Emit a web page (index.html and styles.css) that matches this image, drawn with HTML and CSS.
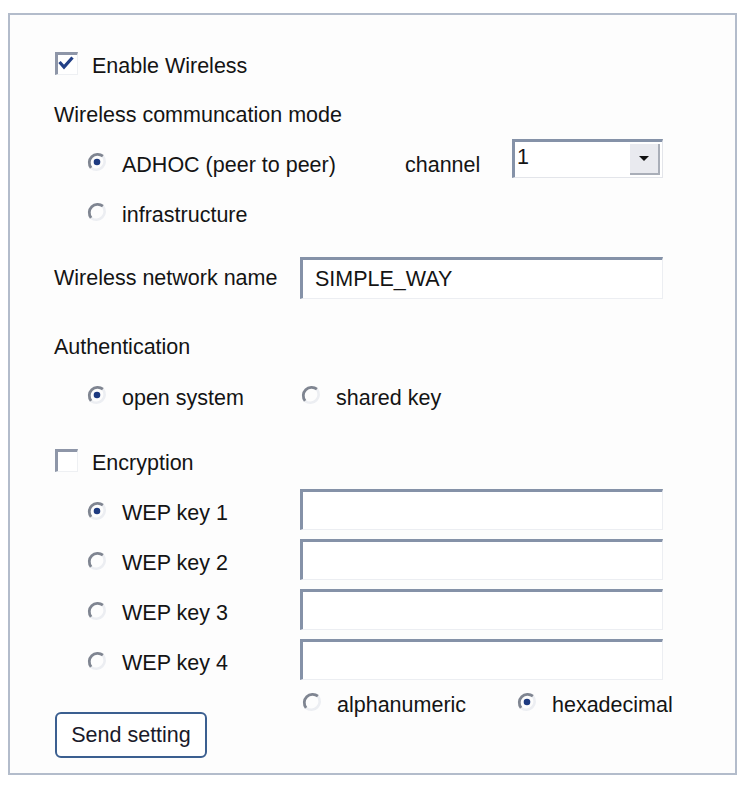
FILE: index.html
```html
<!DOCTYPE html>
<html>
<head>
<meta charset="utf-8">
<link rel="stylesheet" href="styles.css">
</head>
<body>
<div class="frame">
  <div class="row r-a">
    <span class="check"><svg width="22" height="22" viewBox="0 0 22 22"><path d="M4.5 10 L9 15 L17.5 5.5" fill="none" stroke="#213f86" stroke-width="3.2"/></svg></span>
    <span class="cb-label">Enable Wireless</span>
  </div>
  <div class="row r-b">Wireless communcation mode</div>
  <div class="row r-c indent">
    <span class="opt opt-mode"><svg class="radio" width="20" height="20" viewBox="0 0 20 20"><path d="M15.9 4.1 A8.4 8.4 0 0 1 4.1 15.9" fill="none" stroke="#eceef2" stroke-width="2.6"/><path d="M4.1 15.9 A8.4 8.4 0 0 1 15.9 4.1" fill="none" stroke="#7f8591" stroke-width="2.8"/><circle cx="10" cy="10" r="3.3" fill="#1d3a80"/></svg>ADHOC (peer to peer)</span>
    <span class="chan-label">channel</span>
    <span class="select"><span class="sel-val">1</span><span class="sel-btn"><svg width="10" height="6" viewBox="0 0 10 6"><path d="M0 0 H10 L5 5 Z" fill="#111"/></svg></span></span>
  </div>
  <div class="row r-d indent">
    <span class="opt"><svg class="radio" width="20" height="20" viewBox="0 0 20 20"><path d="M15.9 4.1 A8.4 8.4 0 0 1 4.1 15.9" fill="none" stroke="#eceef2" stroke-width="2.6"/><path d="M4.1 15.9 A8.4 8.4 0 0 1 15.9 4.1" fill="none" stroke="#7f8591" stroke-width="2.8"/></svg>infrastructure</span>
  </div>
  <div class="row r-e">
    <span class="lbl-col">Wireless network name</span>
    <span class="field field-name">SIMPLE_WAY</span>
  </div>
  <div class="row r-f">Authentication</div>
  <div class="row r-g indent">
    <span class="opt opt-auth"><svg class="radio" width="20" height="20" viewBox="0 0 20 20"><path d="M15.9 4.1 A8.4 8.4 0 0 1 4.1 15.9" fill="none" stroke="#eceef2" stroke-width="2.6"/><path d="M4.1 15.9 A8.4 8.4 0 0 1 15.9 4.1" fill="none" stroke="#7f8591" stroke-width="2.8"/><circle cx="10" cy="10" r="3.3" fill="#1d3a80"/></svg>open system</span>
    <span class="opt"><svg class="radio" width="20" height="20" viewBox="0 0 20 20"><path d="M15.9 4.1 A8.4 8.4 0 0 1 4.1 15.9" fill="none" stroke="#eceef2" stroke-width="2.6"/><path d="M4.1 15.9 A8.4 8.4 0 0 1 15.9 4.1" fill="none" stroke="#7f8591" stroke-width="2.8"/></svg>shared key</span>
  </div>
  <div class="row r-h">
    <span class="check"></span>
    <span class="cb-label">Encryption</span>
  </div>
  <div class="row key first">
    <span class="lbl-col indent"><span class="opt"><svg class="radio" width="20" height="20" viewBox="0 0 20 20"><path d="M15.9 4.1 A8.4 8.4 0 0 1 4.1 15.9" fill="none" stroke="#eceef2" stroke-width="2.6"/><path d="M4.1 15.9 A8.4 8.4 0 0 1 15.9 4.1" fill="none" stroke="#7f8591" stroke-width="2.8"/><circle cx="10" cy="10" r="3.3" fill="#1d3a80"/></svg>WEP key 1</span></span>
    <span class="field"></span>
  </div>
  <div class="row key">
    <span class="lbl-col indent"><span class="opt"><svg class="radio" width="20" height="20" viewBox="0 0 20 20"><path d="M15.9 4.1 A8.4 8.4 0 0 1 4.1 15.9" fill="none" stroke="#eceef2" stroke-width="2.6"/><path d="M4.1 15.9 A8.4 8.4 0 0 1 15.9 4.1" fill="none" stroke="#7f8591" stroke-width="2.8"/></svg>WEP key 2</span></span>
    <span class="field"></span>
  </div>
  <div class="row key">
    <span class="lbl-col indent"><span class="opt"><svg class="radio" width="20" height="20" viewBox="0 0 20 20"><path d="M15.9 4.1 A8.4 8.4 0 0 1 4.1 15.9" fill="none" stroke="#eceef2" stroke-width="2.6"/><path d="M4.1 15.9 A8.4 8.4 0 0 1 15.9 4.1" fill="none" stroke="#7f8591" stroke-width="2.8"/></svg>WEP key 3</span></span>
    <span class="field"></span>
  </div>
  <div class="row key">
    <span class="lbl-col indent"><span class="opt"><svg class="radio" width="20" height="20" viewBox="0 0 20 20"><path d="M15.9 4.1 A8.4 8.4 0 0 1 4.1 15.9" fill="none" stroke="#eceef2" stroke-width="2.6"/><path d="M4.1 15.9 A8.4 8.4 0 0 1 15.9 4.1" fill="none" stroke="#7f8591" stroke-width="2.8"/></svg>WEP key 4</span></span>
    <span class="field"></span>
  </div>
  <div class="last">
    <button class="btn">Send setting</button>
    <div class="fmt">
      <span class="opt opt-fmt"><svg class="radio" width="20" height="20" viewBox="0 0 20 20"><path d="M15.9 4.1 A8.4 8.4 0 0 1 4.1 15.9" fill="none" stroke="#eceef2" stroke-width="2.6"/><path d="M4.1 15.9 A8.4 8.4 0 0 1 15.9 4.1" fill="none" stroke="#7f8591" stroke-width="2.8"/></svg>alphanumeric</span>
      <span class="opt"><svg class="radio" width="20" height="20" viewBox="0 0 20 20"><path d="M15.9 4.1 A8.4 8.4 0 0 1 4.1 15.9" fill="none" stroke="#eceef2" stroke-width="2.6"/><path d="M4.1 15.9 A8.4 8.4 0 0 1 15.9 4.1" fill="none" stroke="#7f8591" stroke-width="2.8"/><circle cx="10" cy="10" r="3.3" fill="#1d3a80"/></svg>hexadecimal</span>
    </div>
  </div>
</div>
</body>
</html>
```
FILE: styles.css
```css
html, body {
  margin: 0;
  padding: 0;
  background: #ffffff;
}
body {
  font-family: "Liberation Sans", Arial, sans-serif;
  font-size: 21.5px;
  color: #141414;
}
.frame {
  box-sizing: border-box;
  margin: 13px 0 0 8px;
  width: 729px;
  height: 762px;
  border: 2px solid #b3bccb;
  background: #fdfdfd;
  padding: 31px 0 0 44px;
}
.row {
  display: flex;
  align-items: center;
  height: 40px;
}
.indent { padding-left: 33px; }
.r-b { margin-top: 9px; }
.r-c { margin-top: 10px; }
.r-d { margin-top: 10px; }
.r-e { margin-top: 22px; height: 42px; }
.r-f { margin-top: 28px; }
.r-g { margin-top: 11px; }
.r-h { margin-top: 25px; }
.key { height: 41px; margin-top: 9px; }
.key.first { margin-top: 6px; }
.key .opt { margin-top: 8px; }

.check {
  box-sizing: border-box;
  width: 23px;
  height: 23px;
  margin-left: 1px;
  margin-right: 14px;
  margin-bottom: 5px;
  border-top: 3px solid #8e96a8;
  border-left: 3px solid #8e96a8;
  border-right: 1px solid #eef0f3;
  border-bottom: 1px solid #eef0f3;
  background: #ffffff;
  display: flex;
  align-items: center;
  justify-content: center;
}
.check svg { margin: -3px 0 0 -3px; }

.opt {
  display: flex;
  align-items: center;
}
.radio {
  flex: none;
  margin-right: 15px;
  margin-bottom: 6px;
}
.opt-mode { width: 318px; }
.opt-auth { width: 214px; }
.opt-fmt { width: 215px; }

.chan-label { width: 107px; }
.select {
  box-sizing: border-box;
  align-self: flex-start;
  margin-top: -6px;
  width: 151px;
  height: 39px;
  display: flex;
  align-items: stretch;
  border-top: 3px solid #8592a8;
  border-left: 3px solid #8592a8;
  border-right: 1px solid #e3e5ea;
  border-bottom: 1px solid #e3e5ea;
  background: #ffffff;
}
.sel-val {
  flex: 1;
  padding-left: 2px;
  line-height: 30px;
}
.sel-btn {
  width: 28px;
  margin: 2px 2px 2px 0;
  background: #e9eaef;
  border-right: 2px solid #a9aeb8;
  border-bottom: 2px solid #a9aeb8;
  display: flex;
  align-items: center;
  justify-content: center;
}

.lbl-col {
  box-sizing: border-box;
  width: 246px;
  flex: none;
  display: flex;
}
.field {
  box-sizing: border-box;
  width: 363px;
  height: 41px;
  border-top: 3px solid #8592a8;
  border-left: 3px solid #8592a8;
  border-right: 1px solid #eceef2;
  border-bottom: 1px solid #eceef2;
  background: #ffffff;
  display: flex;
  align-items: center;
  padding-left: 12px;
}
.field-name { height: 42px; }

.last {
  margin-top: 9px;
  height: 69px;
  display: grid;
  grid-template-columns: 248px auto;
}
.btn {
  align-self: end;
  margin-left: 1px;
  width: 152px;
  height: 46px;
  border: 2px solid #3b5f90;
  border-radius: 6px;
  background: #ffffff;
  font-family: "Liberation Sans", Arial, sans-serif;
  font-size: 21.5px;
  color: #1a1a2a;
  padding: 0;
}
.fmt {
  align-self: start;
  display: flex;
  height: 32px;
  align-items: center;
}
```
